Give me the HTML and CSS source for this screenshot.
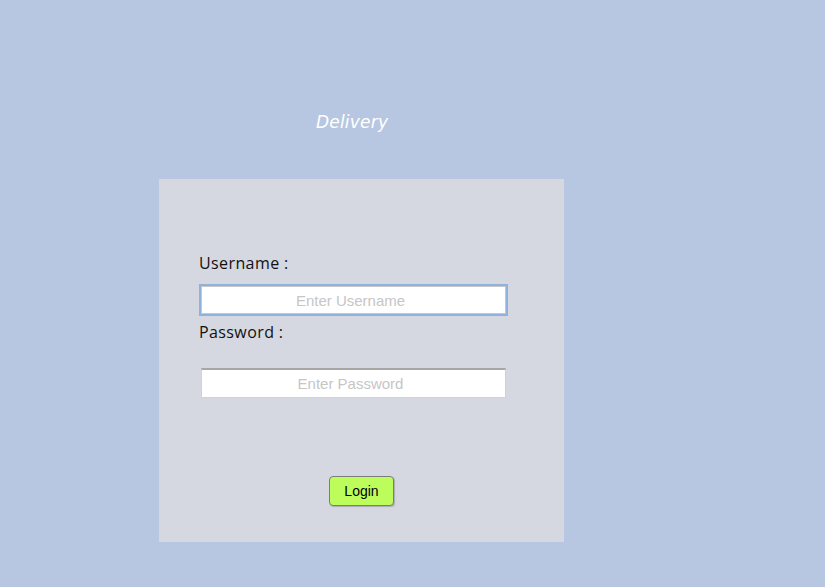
FILE: index.html
```html
<!DOCTYPE html>
<html>
<head>
<meta charset="utf-8">
<link rel="stylesheet" href="styles.css">
</head>
<body>
<div class="page">
  <header class="header"><h1 class="title">Delivery</h1></header>
  <form class="panel">
    <label class="label" for="u">Username :</label>
    <input class="field field-focus" id="u" type="text" placeholder="Enter Username">
    <label class="label label-pass" for="p">Password :</label>
    <input class="field field-pass" id="p" type="password" placeholder="Enter Password">
    <div class="actions"><button class="btn" type="button">Login</button></div>
  </form>
</div>
</body>
</html>
```
FILE: styles.css
```css
html, body { margin: 0; padding: 0; }
body {
  background: #b7c7e2;
  width: 825px;
  height: 587px;
  overflow: hidden;
}
.page { padding-left: 159px; }
.header {
  height: 179px;
  display: flex;
  flex-direction: column;
  justify-content: flex-start;
}
.title {
  margin: 0;
  padding-top: 110px;
  padding-left: 157px;
  font-family: "DejaVu Sans", sans-serif;
  font-style: italic;
  font-weight: normal;
  font-size: 17px;
  line-height: 24px;
  color: #ffffff;
  letter-spacing: 0.2px;
}
.panel {
  width: 405px;
  height: 363px;
  box-sizing: border-box;
  background: #d5d8e0;
  padding: 73px 0 0 40px;
  display: flex;
  flex-direction: column;
  align-items: flex-start;
}
.label {
  font-family: "Open Sans", sans-serif;
  font-size: 16px;
  line-height: 22px;
  letter-spacing: 0.4px;
  color: #111;
  margin-bottom: 10px;
}
.label-pass { margin-top: 5px; margin-bottom: 0; }
.field {
  box-sizing: border-box;
  font-family: "Liberation Sans", Arial, sans-serif;
  font-size: 15px;
  text-align: center;
  background: #fff;
  outline: none;
  margin: 0;
  padding: 0 6px 0 0;
}
.field::placeholder { color: #c6c6c6; }
.field-focus {
  width: 309px;
  height: 32px;
  margin-left: 0;
  border: 2px solid #8fb2dc;
  box-shadow: inset 0 0 0 1px #c8c8c8;
}
.field-pass {
  width: 305px;
  height: 30px;
  margin-left: 2px;
  margin-top: 25px;
  border: 1px solid #d2d2d2;
  border-top: 2px solid #a6a6a6;
}
.actions {
  width: 325px;
  display: flex;
  justify-content: center;
  margin-top: 78px;
}
.btn {
  width: 65px;
  height: 30px;
  background: #bdfd5b;
  border: 1px solid #7c7c7c;
  border-radius: 4px;
  font-family: "Liberation Sans", Arial, sans-serif;
  font-size: 14px;
  color: #000;
  padding: 0;
  box-shadow: 1px 1px 1px rgba(0,0,0,0.2);
}
```
